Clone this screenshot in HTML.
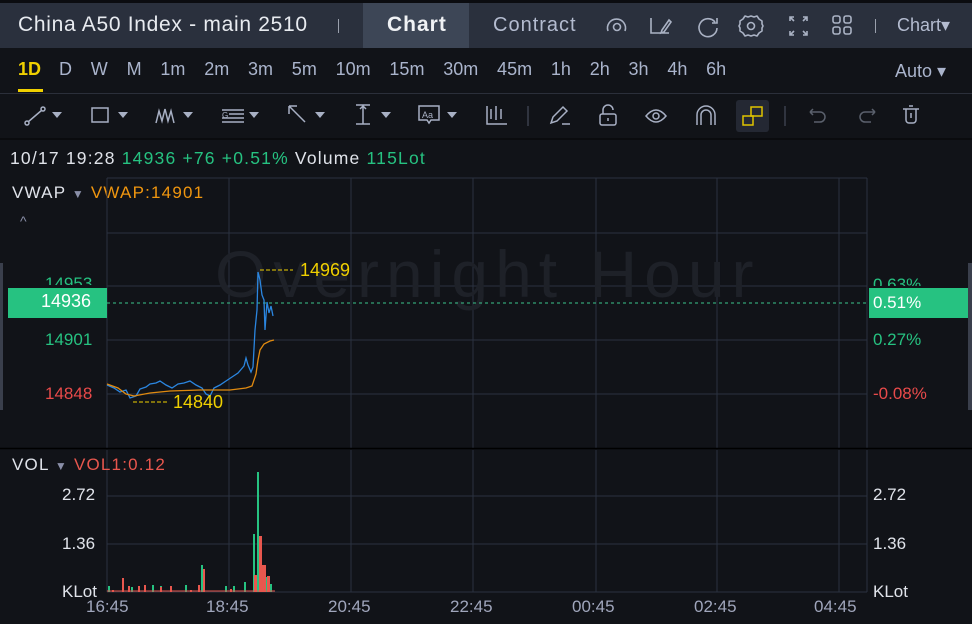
<!DOCTYPE html>
<html><head><meta charset="utf-8"><style>
*{margin:0;padding:0;box-sizing:border-box}
body{width:972px;height:624px;background:#111318;font-family:"Liberation Sans",sans-serif;overflow:hidden;position:relative;color:#d6d9e0}
.a{position:absolute;white-space:nowrap}
</style></head><body>
<div class="a" style="left:0;top:0;width:972px;height:3px;background:#0b0c10"></div>
<div class="a" style="left:0;top:3px;width:972px;height:45px;background:#2a303d"></div>
<div class="a" style="left:363px;top:3px;width:106px;height:45px;background:#3d4656"></div>
<div class="a" style="left:18px;top:13px;font-size:21px;letter-spacing:0.7px;color:#e8ebf0">China A50 Index - main 2510</div>
<div class="a" style="left:338px;top:19px;width:1px;height:14px;background:#9aa0ad"></div>
<div class="a" style="left:387px;top:13px;font-size:21px;font-weight:bold;letter-spacing:1px;color:#f0f2f5">Chart</div>
<div class="a" style="left:493px;top:14px;font-size:20px;letter-spacing:1px;color:#b4bcd0">Contract</div>
<svg class="a" style="left:600px;top:10px" width="270" height="32" fill="none" stroke="#aab2c4" stroke-width="1.6">
<path d="M8 21a9 9 0 1 1 17 0"/><circle cx="17" cy="17" r="3.5"/>
<path d="M51 8v15h18M62 20l7-10 2 2-7 10-3 1z"/>
<path d="M115 12a9 9 0 1 0 2 6M117 8v5h-5"/>
<g transform="translate(-15 0)"><circle cx="166" cy="16" r="3.5"/><path d="M166 6l3 1 3-1 2 3 3 2v3l1 2-1 2v3l-3 2-2 3-3-1-3 1-3-1-3 1-2-3-3-2v-3l-1-2 1-2v-3l3-2 2-3 3 1z" stroke-linejoin="round"/></g>
<path d="M190 11v-4h4M203 7h4v4M190 21v4h4M207 21v4h-4M190 7l4 4M207 7l-4 4M190 25l4-4M207 25l-4-4"/>
<rect x="233" y="6" width="7" height="7" rx="2"/><rect x="244" y="6" width="7" height="7" rx="2"/><rect x="233" y="17" width="7" height="7" rx="2"/><rect x="244" y="17" width="7" height="7" rx="2"/>
</svg>
<div class="a" style="left:875px;top:19px;width:1px;height:14px;background:#9aa0ad"></div>
<div class="a" style="left:897px;top:15px;font-size:18px;color:#b4bcd0">Chart&#9662;</div>

<div class="a" style="left:18px;top:59px;font-size:18px;font-weight:bold;color:#f0d000">1D</div>
<div class="a" style="left:18px;top:89px;width:25px;height:3px;background:#f0d000"></div>
<div class="a" style="left:59px;top:59px;font-size:18px;color:#aab4cc;word-spacing:13.8px">D W M 1m 2m 3m 5m 10m 15m 30m 45m 1h 2h 3h 4h 6h</div>
<div class="a" style="left:895px;top:61px;font-size:18px;color:#aab4cc">Auto &#9662;</div>
<div class="a" style="left:0;top:93px;width:972px;height:1px;background:#2b2f3a"></div>
<svg class="a" style="left:0;top:94px" width="972" height="44" fill="none" stroke="#a8b0c4" stroke-width="1.5">
<circle cx="27" cy="29" r="2"/><circle cx="43" cy="15" r="2"/><path d="M28 28l14-12"/>
<path d="M52 18h10l-5 6z" fill="#a8b0c4" stroke="none"/>
<rect x="92" y="14" width="16" height="14"/><path d="M118 18h10l-5 6z" fill="#a8b0c4" stroke="none"/>
<path d="M156 29l3-12 3 10 3-12 3 12 3-10 3 12"/><path d="M183 18h10l-5 6z" fill="#a8b0c4" stroke="none"/>
<path d="M222 16h22M229 20h15M222 24h22M222 28h22"/><text x="222" y="24" font-size="8" fill="#a8b0c4" stroke="none">G</text><path d="M249 18h10l-5 6z" fill="#a8b0c4" stroke="none"/>
<path d="M289 12l16 16M289 12v8M289 12h8"/><path d="M315 18h10l-5 6z" fill="#a8b0c4" stroke="none"/>
<path d="M356 11h14M356 30h14M363 12v18M360 15l3-3 3 3"/><path d="M381 18h10l-5 6z" fill="#a8b0c4" stroke="none"/>
<path d="M419 12h20v14h-8l-2 3-2-3h-8z"/><text x="422" y="24" font-size="9" fill="#a8b0c4" stroke="none">Aa</text><path d="M447 18h10l-5 6z" fill="#a8b0c4" stroke="none"/>
<path d="M487 12v18h20M491 15v10M496 12v14M501 15v10"/>
<path d="M528 12v20" stroke="#3a3f4c"/>
<path d="M551 29l2-6 10-10 4 4-10 10zM562 30h8"/>
<rect x="600" y="20" width="16" height="11" rx="2"/><path d="M603 20v-4a5 5 0 0 1 10 0M608 24v3"/>
<path d="M646 22q10-12 20 0q-10 12-20 0z"/><circle cx="656" cy="22" r="3"/>
<path d="M697 31v-10a9 9 0 0 1 18 0v10M701 31v-10a5 5 0 0 1 10 0v10"/>
<rect x="736" y="6" width="33" height="32" rx="3" fill="#242833" stroke="none"/>
<rect x="743" y="22" width="10" height="9" stroke="#e0c400"/><rect x="751" y="13" width="11" height="9" stroke="#e0c400"/>
<path d="M785 12v20" stroke="#3a3f4c"/>
<path d="M810 18h10a5 5 0 0 1 0 10h-6M810 18l3-3M810 18l3 3" stroke="#5a606c"/>
<path d="M875 18h-10a5 5 0 0 0 0 10h6M875 18l-3-3M875 18l-3 3" stroke="#5a606c"/>
<path d="M903 15h16M906 15v11a3 3 0 0 0 3 3h4a3 3 0 0 0 3-3v-11M909 12h4M911 19v5"/>
</svg>
<div class="a" style="left:0;top:138px;width:972px;height:2px;background:#0a0b0e"></div>

<div class="a" style="left:10px;top:148px;font-size:17.5px;letter-spacing:1.2px;color:#e0e3ea">10/17 19:28 <span style="color:#26c281">14936 +76 +0.51%</span> Volume <span style="color:#26c281">115Lot</span></div>
<div class="a" style="left:12px;top:183px;font-size:17px;letter-spacing:1.2px;color:#e0e3ea">VWAP <span style="color:#8a8fa8;font-size:12px">&#9660;</span> <span style="color:#f0960f">VWAP:14901</span></div>
<div class="a" style="left:20px;top:213px;font-size:14px;color:#8a8fa8">^</div>
<div class="a" style="left:0;top:263px;width:3px;height:147px;background:#3a3f4c"></div>

<svg class="a" style="left:0;top:0" width="972" height="624">
<g stroke="#2b3140" stroke-width="1">
<path d="M107 178H867M107 233H867M107 286H867M107 340H867M107 394H867M107 496H867M107 544H867"/>
<path d="M229 178V448M351 178V448M473 178V448M596 178V448M717 178V448M839 178V448M867 178V448M107 178V448"/>
<path d="M229 450V592M351 450V592M473 450V592M596 450V592M717 450V592M839 450V592M867 450V592M107 450V592M107 592H867"/>
</g>
<path d="M0 448.5H972" stroke="#000" stroke-width="1.5"/>
<text x="215" y="297" font-size="66" letter-spacing="7" fill="#1e2128" font-family="Liberation Sans">Overnight Hour</text>
<path d="M107 303H867" stroke="#3cc48c" stroke-dasharray="3 3"/>
<path d="M260 270H293M133 402H167" stroke="#f0d000" stroke-dasharray="4 2"/>
<path d="M107 385L114 388L120 392L126 390L130 398L136 396L140 389L146 387L150 384L156 383L160 381L166 385L172 388L178 384L184 383L190 381L196 385L202 388L206 394L210 396L214 388L220 385L226 381L232 377L238 373L244 366L246 358L248 365L251 372L253 367L255 330L257 310L258 272L260 280L262 295L264 300L265 330L267 302L269 313L271 306L273 316" fill="none" stroke="#2b86e0" stroke-width="1.3"/>
<path d="M107 384L118 388L126 394L134 396L150 393L170 391L200 390L230 390L246 388L252 386L256 374L258 360L260 350L264 344L270 341L274 340" fill="none" stroke="#e08a10" stroke-width="1.3"/>
<g fill="#26c281">
<rect x="108" y="586" width="2" height="6"/><rect x="122" y="587" width="2" height="5"/><rect x="131" y="587" width="2" height="5"/><rect x="152" y="585" width="2" height="7"/><rect x="160" y="586" width="2" height="6"/><rect x="185" y="585" width="2" height="7"/><rect x="201" y="565" width="2" height="27"/><rect x="225" y="586" width="2" height="6"/><rect x="233" y="586" width="2" height="6"/><rect x="244" y="582" width="2" height="10"/><rect x="253" y="534" width="2" height="58"/><rect x="257" y="472" width="2" height="120"/><rect x="265" y="577" width="2" height="15"/><rect x="270" y="584" width="2" height="8"/>
</g>
<g fill="#e8574e">
<rect x="112" y="590" width="2" height="2"/><rect x="122" y="578" width="2" height="14"/><rect x="128" y="586" width="2" height="6"/><rect x="138" y="586" width="2" height="6"/><rect x="144" y="585" width="2" height="7"/><rect x="160" y="587" width="2" height="5"/><rect x="170" y="586" width="2" height="6"/><rect x="190" y="590" width="2" height="2"/><rect x="198" y="585" width="2" height="7"/><rect x="203" y="569" width="2" height="23"/><rect x="230" y="589" width="2" height="3"/><rect x="254" y="575" width="3" height="17"/><rect x="259" y="536" width="3" height="56"/><rect x="262" y="565" width="4" height="27"/><rect x="267" y="576" width="3" height="16"/>
</g>
<path d="M107 591H275" stroke="#e8574e" stroke-width="1"/>
</svg>

<div class="a" style="left:8px;top:288px;width:99px;height:30px;background:#26c281"></div>
<div class="a" style="left:41px;top:291px;font-size:18px;color:#fff">14936</div>
<div class="a" style="left:45px;top:274px;font-size:17px;color:#26c281;clip-path:inset(0 0 45% 0)">14953</div>
<div class="a" style="left:45px;top:330px;font-size:17px;color:#26c281">14901</div>
<div class="a" style="left:45px;top:384px;font-size:17px;color:#e84a4a">14848</div>
<div class="a" style="left:300px;top:260px;font-size:18px;color:#f0d000">14969</div>
<div class="a" style="left:173px;top:392px;font-size:18px;color:#f0d000">14840</div>
<div class="a" style="left:869px;top:288px;width:99px;height:30px;background:#26c281"></div>
<div class="a" style="left:873px;top:275px;font-size:17px;color:#26c281;clip-path:inset(0 0 45% 0)">0.63%</div>
<div class="a" style="left:873px;top:293px;font-size:17px;color:#fff">0.51%</div>
<div class="a" style="left:873px;top:330px;font-size:17px;color:#26c281">0.27%</div>
<div class="a" style="left:873px;top:384px;font-size:17px;color:#e84a4a">-0.08%</div>
<div class="a" style="left:968px;top:263px;width:4px;height:147px;background:#3a3f4c"></div>

<div class="a" style="left:12px;top:455px;font-size:17px;letter-spacing:1.2px;color:#e0e3ea">VOL <span style="color:#8a8fa8;font-size:12px">&#9660;</span> <span style="color:#e8574e">VOL1:0.12</span></div>
<div class="a" style="left:62px;top:485px;font-size:17px;color:#e0e3ea">2.72</div>
<div class="a" style="left:62px;top:534px;font-size:17px;color:#e0e3ea">1.36</div>
<div class="a" style="left:62px;top:582px;font-size:17px;color:#e0e3ea">KLot</div>
<div class="a" style="left:873px;top:485px;font-size:17px;color:#e0e3ea">2.72</div>
<div class="a" style="left:873px;top:534px;font-size:17px;color:#e0e3ea">1.36</div>
<div class="a" style="left:873px;top:582px;font-size:17px;color:#e0e3ea">KLot</div>
<div class="a" style="left:86px;top:597px;font-size:17px;color:#a0a6bc">16:45</div>
<div class="a" style="left:206px;top:597px;font-size:17px;color:#a0a6bc">18:45</div>
<div class="a" style="left:328px;top:597px;font-size:17px;color:#a0a6bc">20:45</div>
<div class="a" style="left:450px;top:597px;font-size:17px;color:#a0a6bc">22:45</div>
<div class="a" style="left:572px;top:597px;font-size:17px;color:#a0a6bc">00:45</div>
<div class="a" style="left:694px;top:597px;font-size:17px;color:#a0a6bc">02:45</div>
<div class="a" style="left:814px;top:597px;font-size:17px;color:#a0a6bc">04:45</div>
</body></html>
